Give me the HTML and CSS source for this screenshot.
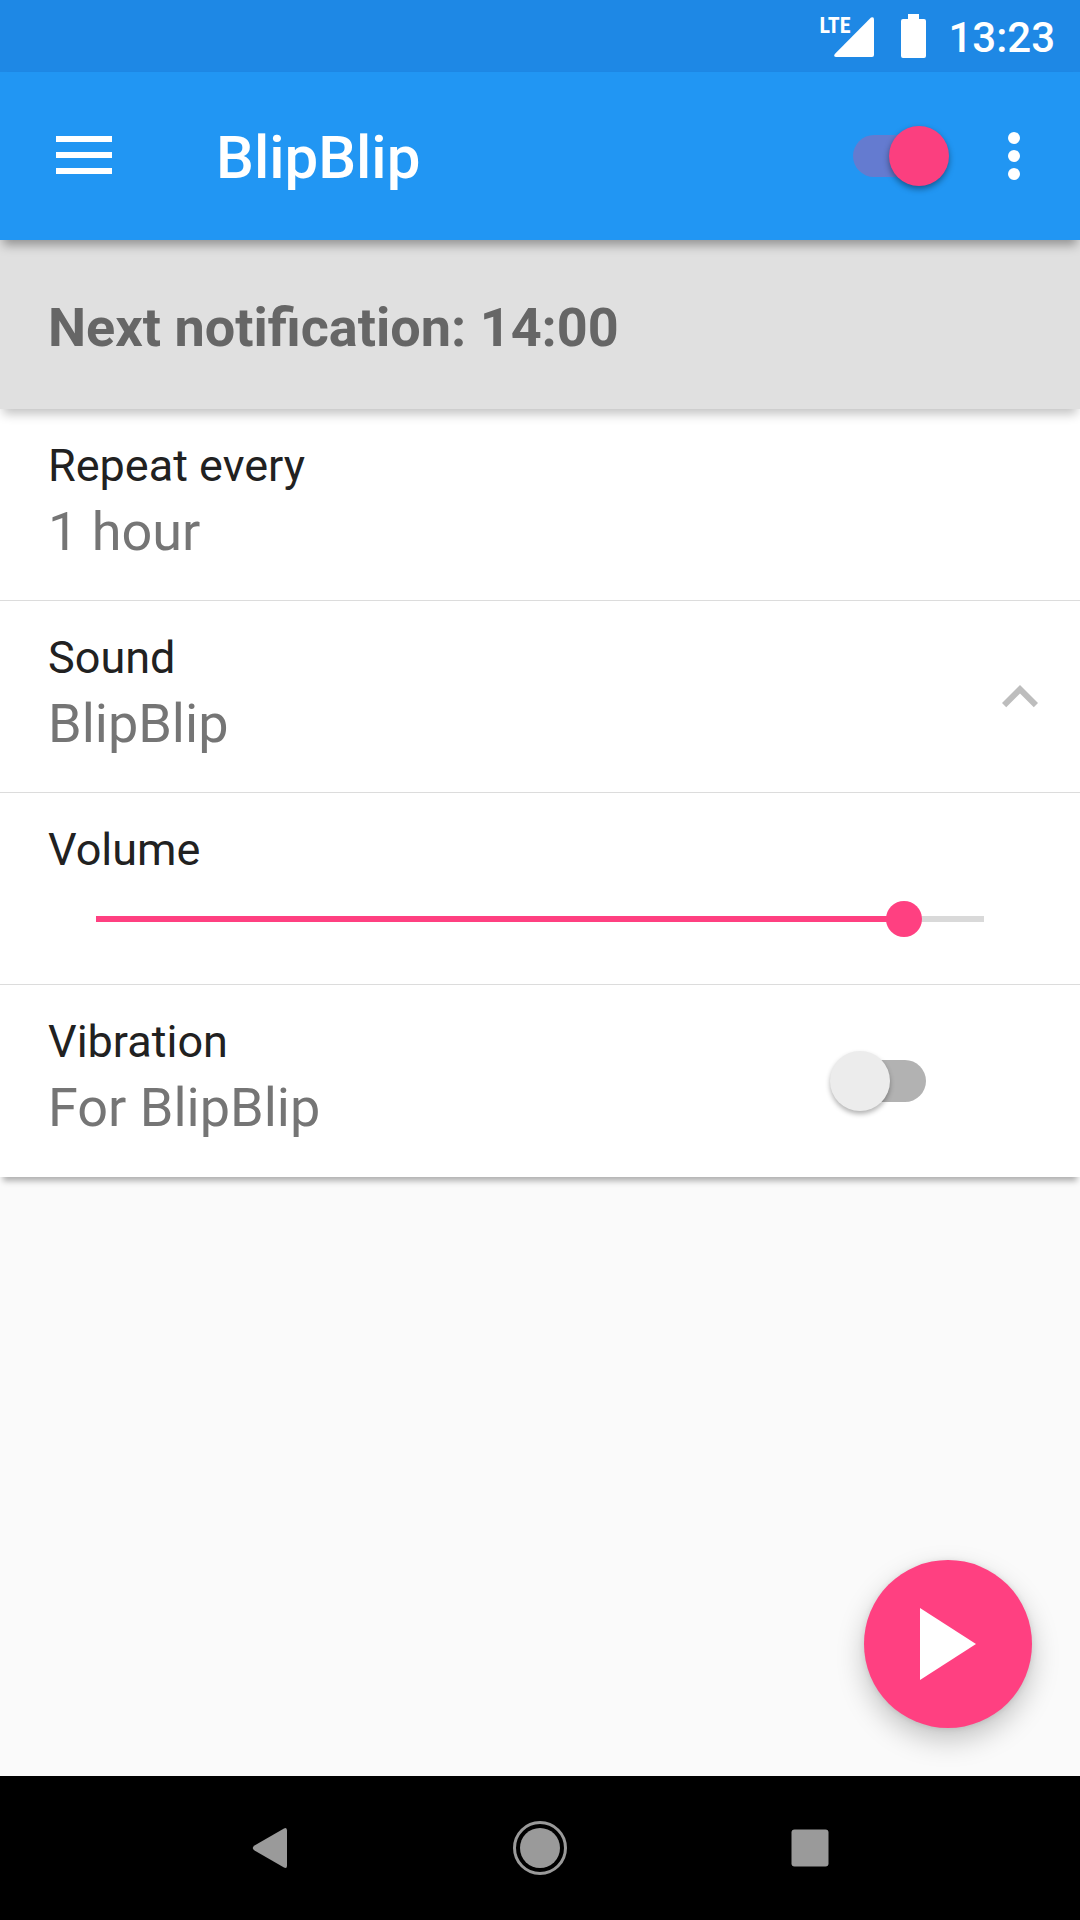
FILE: index.html
```
<!DOCTYPE html>
<html lang="en">
<head>
  <meta charset="utf-8">
  <meta name="viewport" content="width=device-width, initial-scale=1">
  <title>BlipBlip</title>
  <link rel="stylesheet" href="styles.css">
</head>
<body>
  <div class="status-bar">
    <span class="signal">
      <span class="signal-type">LTE</span>
      <svg class="signal-icon" viewBox="0 0 40 40" aria-hidden="true"><path d="M37 .6Q40-.8 40 2.500V38q0 2-2 2H2.500Q-1 40 .8 37z"/></svg>
    </span>
    <svg class="battery-icon" viewBox="0 0 25 44" aria-hidden="true"><path d="M7 0h11v5h5q2 0 2 2v35q0 2-2 2H2q-2 0-2-2V7q0-2 2-2h5z"/></svg>
    <time class="clock">13:23</time>
  </div>

  <header class="app-bar">
    <button class="icon-button" type="button" aria-label="Open menu">
      <svg class="menu-icon" viewBox="0 0 56 40" aria-hidden="true"><path d="M0 0h56v6H0zM0 16h56v6H0zM0 32h56v6H0z"/></svg>
    </button>
    <h1 class="app-title">BlipBlip</h1>
    <input class="switch" type="checkbox" role="switch" aria-label="Notifications" checked>
    <button class="icon-button" type="button" aria-label="More options">
      <svg class="more-icon" viewBox="0 0 12 48" aria-hidden="true"><circle cx="6" cy="6" r="6"/><circle cx="6" cy="24" r="6"/><circle cx="6" cy="42" r="6"/></svg>
    </button>
  </header>

  <p class="banner">Next notification: 14:00</p>

  <main class="content">
    <section class="settings">
      <button class="row" type="button">
        <span class="row-text">
          <span class="label">Repeat every</span>
          <span class="value">1 hour</span>
        </span>
      </button>
      <button class="row" type="button" aria-expanded="true">
        <span class="row-text">
          <span class="label">Sound</span>
          <span class="value">BlipBlip</span>
        </span>
        <svg class="chevron-icon" viewBox="0 0 24 24" aria-hidden="true"><path d="M12 8l-6 6 1.410 1.410L12 10.830l4.590 4.580L18 14z"/></svg>
      </button>
      <div class="row">
        <div class="row-text">
          <label class="label" for="volume">Volume</label>
          <input class="slider" id="volume" type="range" min="0" max="100" value="91">
        </div>
      </div>
      <div class="row">
        <label class="row-text" for="vibration">
          <span class="label">Vibration</span>
          <span class="value">For BlipBlip</span>
        </label>
        <input class="switch row-switch" id="vibration" type="checkbox" role="switch">
      </div>
    </section>

    <button class="play-button" type="button" aria-label="Play">
      <svg class="play-icon" viewBox="0 0 56 72" aria-hidden="true"><path d="M0 0v72l56-36z"/></svg>
    </button>
  </main>

  <nav class="nav-bar">
    <button class="nav-button" type="button" aria-label="Back">
      <svg class="nav-icon" viewBox="0 0 54 54" aria-hidden="true"><path d="M41 7.400Q44 5.800 44 9.500v35q0 3.700-3 2.100L11.500 29.500Q8 27 11.500 24.500z"/></svg>
    </button>
    <button class="nav-button" type="button" aria-label="Home">
      <svg class="nav-icon" viewBox="0 0 54 54" aria-hidden="true"><circle cx="27" cy="27" r="20"/><circle class="ring" cx="27" cy="27" r="25.500"/></svg>
    </button>
    <button class="nav-button" type="button" aria-label="Recent apps">
      <svg class="nav-icon" viewBox="0 0 54 54" aria-hidden="true"><rect x="8.500" y="8.500" width="37" height="37" rx="3"/></svg>
    </button>
  </nav>
</body>
</html>
```
FILE: styles.css
```
* {
  box-sizing: border-box;
}

body {
  display: flex;
  flex-direction: column;
  min-height: 100vh;
  margin: 0;
  background: #fafafa;
  color: #212121;
  font-family: Roboto, "Liberation Sans", sans-serif;
}

button {
  padding: 0;
  border: 0;
  background: none;
  color: inherit;
  font: inherit;
  text-align: left;
}

svg {
  display: block;
  flex: none;
  fill: currentColor;
}

/* System status bar */
.status-bar {
  display: flex;
  align-items: center;
  justify-content: flex-end;
  height: 72px;
  padding-right: 25px;
  background: #1e88e5;
  color: #fff;
}

.signal {
  position: relative;
  padding-top: 2px;
  margin-right: 27px;
}

.signal-icon {
  width: 40px;
  height: 40px;
}

.signal-type {
  position: absolute;
  right: 24px;
  bottom: 20px;
  font-family: "Roboto Condensed", "Liberation Sans Narrow", Roboto, sans-serif;
  font-size: 22px;
  font-weight: 700;
  line-height: 22px;
}

.battery-icon {
  width: 25px;
  height: 44px;
  margin-right: 22px;
}

.clock {
  padding-top: 3px;
  font-size: 42px;
  font-weight: 500;
  line-height: 50px;
}

/* App bar */
.app-bar {
  position: relative;
  z-index: 2;
  display: flex;
  align-items: center;
  height: 168px;
  padding: 0 24px 0 42px;
  background: #2196f3;
  box-shadow: 0 8px 10px -3px rgba(0, 0, 0, 0.35);
  color: #fff;
}

.icon-button {
  display: grid;
  flex: none;
  place-items: center;
  width: 84px;
  height: 84px;
}

.menu-icon {
  width: 56px;
  height: 40px;
}

.more-icon {
  width: 12px;
  height: 48px;
}

.app-title {
  flex: 1;
  margin: 0 0 0 90px;
  padding-top: 4px;
  font-size: 60px;
  font-weight: 500;
  line-height: 70px;
}

.app-bar .switch {
  margin-right: 23px;
}

.banner {
  position: relative;
  z-index: 1;
  margin: 0;
  padding: 56px 48px 49px;
  background: #e0e0e0;
  box-shadow: 0 8px 10px -3px rgba(0, 0, 0, 0.24);
  color: #666;
  font-size: 54px;
  font-weight: 700;
  line-height: 64px;
}

/* Switch */
.switch {
  position: relative;
  display: flex;
  flex: none;
  align-items: center;
  width: 96px;
  height: 60px;
  margin: 0;
  appearance: none;
}

.switch::before {
  content: "";
  width: 90px;
  height: 42px;
  margin-left: 6px;
  border-radius: 21px;
  background: #b2b2b2;
}

.switch::after {
  content: "";
  position: absolute;
  top: 0;
  left: 0;
  width: 60px;
  height: 60px;
  border-radius: 50%;
  background: #ececec;
  box-shadow: 0 3px 5px rgba(0, 0, 0, 0.3);
}

.switch:checked::before {
  margin-left: 0;
  background: rgba(255, 64, 129, 0.3);
}

.switch:checked::after {
  right: 0;
  left: auto;
  background: #fb3f7f;
  box-shadow: 0 3px 6px rgba(0, 0, 0, 0.4);
}

/* Settings list */
.content {
  display: flex;
  flex: 1;
  flex-direction: column;
}

.settings {
  display: flex;
  flex-direction: column;
  background: #fff;
  box-shadow: 0 7px 6px -3px rgba(0, 0, 0, 0.3);
}

.row {
  display: flex;
  align-items: center;
  min-height: 192px;
  border-bottom: 1px solid #dcdcdc;
}

.row:last-child {
  border-bottom-color: transparent;
}

.row-text {
  display: flex;
  flex: 1;
  flex-direction: column;
  gap: 8px;
  align-self: stretch;
  padding: 30px 48px;
}

.label {
  font-size: 45px;
  line-height: 53px;
}

.value {
  color: #757575;
  font-size: 54px;
  line-height: 63px;
}

.chevron-icon {
  width: 72px;
  height: 72px;
  margin-right: 24px;
  color: #bdbdbd;
}

.row-switch {
  margin-right: 154px;
}

/* The track is inset by the thumb's radius at both ends */
.slider {
  height: 70px;
  margin: 0 30px;
  appearance: none;
  background:
    linear-gradient(to right, #ff4081 91%, #d9d9d9 91%) center / calc(100% - 36px) 6px no-repeat;
}

.slider::-webkit-slider-thumb {
  width: 36px;
  height: 36px;
  border: 0;
  border-radius: 50%;
  appearance: none;
  background: #ff4081;
}

.play-button {
  display: grid;
  place-items: center;
  align-self: flex-end;
  width: 168px;
  height: 168px;
  margin: auto 48px 48px;
  border-radius: 50%;
  background: #ff4081;
  box-shadow: 0 12px 28px rgba(0, 0, 0, 0.22), 0 1px 6px rgba(0, 0, 0, 0.1);
  color: #fff;
}

.play-icon {
  width: 56px;
  height: 72px;
}

/* System navigation bar */
.nav-bar {
  display: grid;
  grid-template-columns: repeat(3, 1fr);
  height: 144px;
  padding: 0 12.5%;
  background: #000;
  color: #9a9a9a;
}

.nav-button {
  display: grid;
  place-items: center;
}

.nav-icon {
  width: 54px;
  height: 54px;
}

.ring {
  fill: none;
  stroke: currentColor;
  stroke-width: 3;
}
```
